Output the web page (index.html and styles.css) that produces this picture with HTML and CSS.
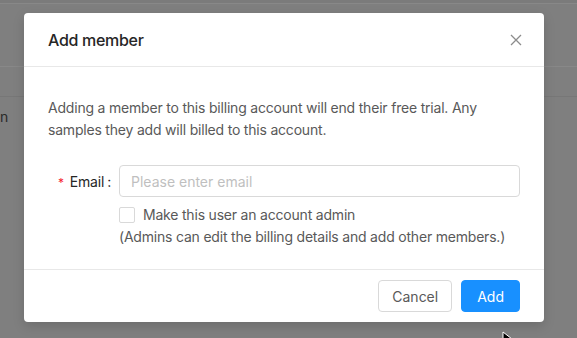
FILE: index.html
```html
<!DOCTYPE html>
<html lang="en">
<head>
<meta charset="utf-8">
<link rel="stylesheet" href="styles.css">
</head>
<body>
<div class="page">
  <div class="bg-top"></div>
  <div class="bg-header"></div>
  <div class="bg-row"></div>
  <div class="bg-text">n</div>
</div>
<div class="modal">
  <div class="modal-header">
    <div class="modal-title">Add member</div>
    <button class="close" aria-label="Close">
      <svg width="12" height="12" viewBox="0 0 12 12"><path d="M1 1L11 11M11 1L1 11" stroke="#8c8c8c" stroke-width="1.3" fill="none"/></svg>
    </button>
  </div>
  <div class="modal-body">
    <p class="intro">Adding a member to this billing account will end their free trial. Any samples they add will billed to this account.</p>
    <div class="form-item">
      <label class="label"><span class="req">*</span>Email<span class="colon">:</span></label>
      <input class="input" type="text" placeholder="Please enter email">
    </div>
    <div class="form-extra">
      <label class="check"><span class="box"></span><span class="check-text">Make this user an account admin</span></label>
      <div class="note">(Admins can edit the billing details and add other members.)</div>
    </div>
  </div>
  <div class="modal-footer">
    <button class="btn">Cancel</button>
    <button class="btn primary">Add</button>
  </div>
</div>
<svg class="cursor" width="12" height="14" viewBox="0 0 12 14"><path d="M1 1L1 12L4 9L6 13L8 12L6 8L10 8Z" fill="#000" stroke="#fff" stroke-width="1"/></svg>
</body>
</html>
```
FILE: styles.css
```css
* { box-sizing: border-box; }
html, body { margin: 0; padding: 0; }
body {
  width: 577px;
  height: 338px;
  overflow: hidden;
  background: #7f7f7f;
  font-family: Inter, "Liberation Sans", Arial, sans-serif;
  font-size: 14px;
  letter-spacing: -0.2px;
  position: relative;
}
.page { height: 338px; }
.bg-top { height: 4px; border-bottom: 1px solid #888; background: #7b7b7b; }
.bg-header { height: 63px; border-bottom: 1px solid #888; }
.bg-row { height: 30px; border-bottom: 1px solid #777; }
.bg-text {
  margin-top: 9px;
  color: #2a2a2a;
  font-size: 14px;
  line-height: 22px;
}
.modal {
  position: absolute;
  left: 24px;
  top: 13px;
  width: 520px;
  background: #fff;
  border-radius: 4px;
  box-shadow: 0 4px 12px rgba(0,0,0,0.15);
}
.modal-header {
  display: flex;
  align-items: center;
  justify-content: space-between;
  padding: 16px 24px;
  border-bottom: 1px solid #e8e8e8;
  height: 54px;
}
.modal-title {
  font-size: 16px;
  line-height: 22px;
  font-weight: 500;
  letter-spacing: -0.3px;
  color: #262626;
}
.close {
  border: 0;
  background: none;
  padding: 0;
  width: 12px;
  height: 12px;
  margin-right: -2px;
  display: flex;
}
.modal-body {
  padding: 30px 24px 21px;
  color: #595959;
}
.intro {
  margin: 0 0 24px;
  line-height: 22px;
}
.form-item {
  display: flex;
  align-items: center;
  height: 32px;
}
.label {
  width: 71px;
  flex: none;
  text-align: right;
  color: #262626;
  padding-right: 8px;
  white-space: nowrap;
}
.req { color: #f5222d; margin-right: 6px; font-size: 12px; }
.colon { margin-left: 3px; }
.input {
  flex: 1;
  height: 32px;
  border: 1px solid #d9d9d9;
  border-radius: 4px;
  padding: 4px 11px;
  font: inherit;
  color: #595959;
  outline: none;
}
.input::placeholder { color: #bfbfbf; }
.form-extra {
  margin-left: 71px;
  padding-top: 7px;
  line-height: 22px;
}
.check { display: flex; align-items: center; height: 22px; }
.box {
  width: 16px;
  height: 16px;
  border: 1px solid #d9d9d9;
  border-radius: 2px;
  margin-right: 8px;
}
.check-text { color: #595959; }
.note { color: #595959; white-space: nowrap; }
.modal-footer {
  border-top: 1px solid #e8e8e8;
  padding: 10px 24px;
  display: flex;
  justify-content: flex-end;
  gap: 9px;
}
.btn {
  height: 32px;
  padding: 0 13px;
  font: inherit;
  font-size: 14px;
  border: 1px solid #d9d9d9;
  border-radius: 4px;
  background: #fff;
  color: #595959;
}
.primary {
  padding: 0 15px;
  background: #1890ff;
  border-color: #1890ff;
  color: #fff;
}
.cursor {
  position: absolute;
  left: 502px;
  top: 331px;
}
```
